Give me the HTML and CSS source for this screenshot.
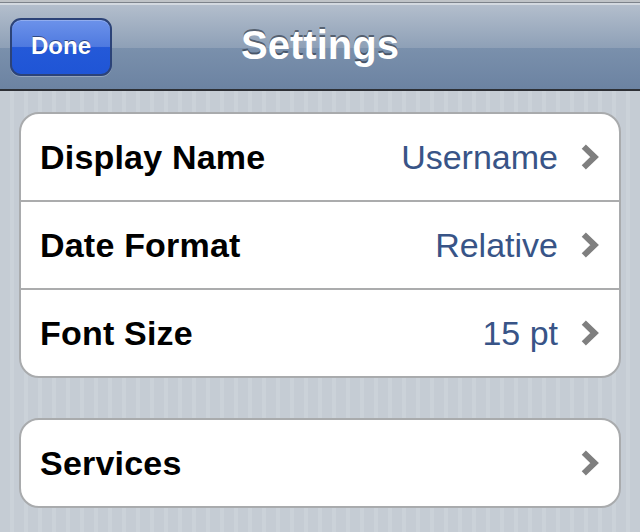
FILE: index.html
```html
<!DOCTYPE html>
<html>
<head>
<meta charset="utf-8">
<title>Settings</title>
<link rel="stylesheet" href="styles.css">
</head>
<body>
<header class="navbar">
  <div class="nav-left"><button class="done">Done</button></div>
  <h1 class="title">Settings</h1>
  <div class="nav-right"></div>
</header>
<main class="content">
  <section class="group">
    <div class="row">
      <span class="label">Display Name</span>
      <span class="value">Username</span>
      <svg class="chevron" width="18" height="26" viewBox="0 0 18 26"><path d="M2.8 2.6 L13.6 13 L2.8 23.4" fill="none" stroke="#7f7f7f" stroke-width="6" stroke-linejoin="miter" stroke-miterlimit="1.6"/></svg>
    </div>
    <div class="row">
      <span class="label">Date Format</span>
      <span class="value">Relative</span>
      <svg class="chevron" width="18" height="26" viewBox="0 0 18 26"><path d="M2.8 2.6 L13.6 13 L2.8 23.4" fill="none" stroke="#7f7f7f" stroke-width="6" stroke-linejoin="miter" stroke-miterlimit="1.6"/></svg>
    </div>
    <div class="row">
      <span class="label">Font Size</span>
      <span class="value">15 pt</span>
      <svg class="chevron" width="18" height="26" viewBox="0 0 18 26"><path d="M2.8 2.6 L13.6 13 L2.8 23.4" fill="none" stroke="#7f7f7f" stroke-width="6" stroke-linejoin="miter" stroke-miterlimit="1.6"/></svg>
    </div>
  </section>
  <section class="group">
    <div class="row">
      <span class="label">Services</span>
      <svg class="chevron" width="18" height="26" viewBox="0 0 18 26"><path d="M2.8 2.6 L13.6 13 L2.8 23.4" fill="none" stroke="#7f7f7f" stroke-width="6" stroke-linejoin="miter" stroke-miterlimit="1.6"/></svg>
    </div>
  </section>
</main>
</body>
</html>
```

FILE: styles.css
```css
html, body {
  margin: 0;
  padding: 0;
}
body {
  width: 640px;
  height: 532px;
  overflow: hidden;
  font-family: "Liberation Sans", Arial, Helvetica, sans-serif;
  background-color: #c5ccd4;
  background-image: repeating-linear-gradient(to right, #c5ccd4 0px, #c5ccd4 10px, #cbd2d9 10px, #cbd2d9 14px);
}
.navbar {
  height: 91px;
  box-sizing: border-box;
  padding: 4px 10px 2px 10px;
  display: grid;
  grid-template-columns: 1fr auto 1fr;
  align-items: center;
  background: linear-gradient(to bottom,
    #bfc3c7 0px, #bfc3c7 2px,
    #7d838b 2px, #7d838b 3px,
    #d3d9e0 3px, #d3d9e0 5px,
    #b3becc 5px, #8ea0b7 48px,
    #7a90ac 48px, #6c83a2 89px,
    #2d3036 89px, #2d3036 91px);
}
.nav-left {
  display: flex;
  justify-content: flex-start;
}
.done {
  width: 102px;
  height: 58px;
  margin: 0;
  padding: 0 0 2px 0;
  border: 2px solid #2c4378;
  border-radius: 11px;
  background: linear-gradient(to bottom, #6c92ea 0%, #4f7ae0 49%, #2459d8 51%, #1f55d6 100%);
  box-shadow: 0 1px 0 rgba(255,255,255,0.25), inset 0 1px 0 rgba(255,255,255,0.25);
  color: #fff;
  font-family: "Liberation Sans", Arial, sans-serif;
  font-weight: bold;
  font-size: 24px;
  text-shadow: 0 -1px 0 rgba(0,0,0,0.45);
}
.title {
  margin: 0;
  color: #fff;
  font-size: 40px;
  font-weight: bold;
  line-height: 1;
  padding-bottom: 3px;
  text-shadow: 0 -2px 0 rgba(40,48,60,0.6);
}
.content {
  padding: 21px 19px 0 19px;
  display: flex;
  flex-direction: column;
  gap: 40px;
}
.group {
  background: #fff;
  border: 2px solid #a9abad;
  border-radius: 20px;
  overflow: hidden;
}
.row {
  height: 86px;
  display: flex;
  align-items: center;
  padding: 0 20px 0 19px;
  font-size: 34px;
}
.row + .row {
  border-top: 2px solid #abacad;
}
.label {
  flex: 1;
  font-weight: bold;
  color: #000;
  letter-spacing: 0.2px;
}
.value {
  color: #385487;
  margin-right: 23px;
}
.chevron {
  display: block;
  flex: none;
}
```
